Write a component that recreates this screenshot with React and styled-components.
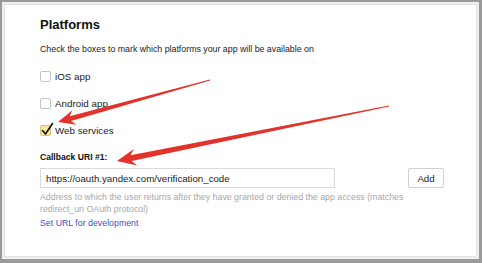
import styled, { createGlobalStyle } from 'styled-components'

const GlobalStyle = createGlobalStyle`
  html, body {
    margin: 0;
    padding: 0;
    background: #9a9a9a;
    font-family: "Liberation Sans", Arial, sans-serif;
  }
`

const Frame = styled.div`
  position: relative;
  box-sizing: border-box;
  width: 482px;
  height: 263px;
  padding: 2px 3px 4px 2px;
  background: #9a9a9a;
`

const Matte = styled.div`
  box-sizing: border-box;
  height: 100%;
  padding: 2px;
  background: #efefef;
`

const Card = styled.div`
  box-sizing: border-box;
  height: 100%;
  padding: 12px 0 0 35px;
  background: #fff;
  border: 1px solid #e3e3e3;
  display: flex;
  flex-direction: column;
  align-items: flex-start;
`

const Title = styled.h2`
  margin: 0;
  font-size: 13px;
  line-height: 16px;
  font-weight: 700;
  color: #111;
`

const Lead = styled.p`
  margin: 11px 0 0;
  font-size: 8.8px;
  line-height: 11px;
  color: #222;
`

const Options = styled.div`
  margin-top: 14px;
  display: flex;
  flex-direction: column;
  gap: 13px;
`

const Option = styled.label`
  display: flex;
  align-items: center;
  gap: 4px;
  height: 14px;
  font-size: 9.8px;
  color: #222;
`

const Box = styled.span`
  position: relative;
  box-sizing: border-box;
  width: 11px;
  height: 11px;
  border-radius: 2px;
  border: 1px solid ${p => (p.$checked ? '#d6c27c' : '#c4c4c4')};
  background: ${p => (p.$checked ? '#f8e6a2' : '#fff')};
`

const Tick = styled.svg`
  position: absolute;
  left: 0;
  top: -3px;
  width: 12px;
  height: 13px;
  overflow: visible;
`

const FieldLabel = styled.div`
  margin-top: 15px;
  font-size: 8.6px;
  line-height: 11px;
  font-weight: 700;
  color: #111;
`

const FieldRow = styled.div`
  margin-top: 5px;
  display: flex;
  align-items: center;
  gap: 73px;
`

const Input = styled.div`
  box-sizing: border-box;
  width: 295px;
  height: 20px;
  padding: 0 5px;
  display: flex;
  align-items: center;
  border: 1px solid #dadada;
  font-size: 9.7px;
  color: #222;
`

const Button = styled.div`
  box-sizing: border-box;
  width: 36px;
  height: 20px;
  display: flex;
  align-items: center;
  justify-content: center;
  border: 1px solid #d0d0d0;
  border-radius: 2px;
  background: #fff;
  font-size: 9.7px;
  color: #222;
`

const Hint = styled.p`
  margin: 4px 0 0;
  width: 375px;
  font-size: 8.8px;
  line-height: 11.5px;
  color: #a8a8a8;
`

const Link = styled.a`
  margin-top: 3px;
  font-size: 8.8px;
  line-height: 11px;
  color: #4450c4;
  text-decoration: none;
`

const Overlay = styled.svg`
  position: absolute;
  left: 0;
  top: 0;
  width: 482px;
  height: 263px;
  pointer-events: none;
`

const arrowPoints = (x1, y1, x2, y2, w0, w1, len, head) => {
  const dx = x2 - x1
  const dy = y2 - y1
  const l = Math.hypot(dx, dy)
  const ux = dx / l
  const uy = dy / l
  const nx = -uy
  const ny = ux
  const neck = [x2 - ux * len * 0.75, y2 - uy * len * 0.75]
  const base = [x2 - ux * len, y2 - uy * len]
  const pts = [
    [x1 + nx * w0 / 2, y1 + ny * w0 / 2],
    [neck[0] + nx * w1 / 2, neck[1] + ny * w1 / 2],
    [base[0] + nx * head / 2, base[1] + ny * head / 2],
    [x2, y2],
    [base[0] - nx * head / 2, base[1] - ny * head / 2],
    [neck[0] - nx * w1 / 2, neck[1] - ny * w1 / 2],
    [x1 - nx * w0 / 2, y1 - ny * w0 / 2],
  ]
  return pts.map(p => p.map(v => v.toFixed(1)).join(',')).join(' ')
}

const platforms = [
  { name: 'iOS app', checked: false },
  { name: 'Android app', checked: false },
  { name: 'Web services', checked: true },
]

export default function App() {
  return (
    <>
      <GlobalStyle />
      <Frame>
        <Matte>
          <Card>
            <Title>Platforms</Title>
            <Lead>Check the boxes to mark which platforms your app will be available on</Lead>
            <Options>
              {platforms.map(p => (
                <Option key={p.name}>
                  <Box $checked={p.checked}>
                    {p.checked && (
                      <Tick viewBox='0 0 12 13'>
                        <path d='M1.5 7.5 L4.5 11 L11.5 0.5' fill='none' stroke='#111' strokeWidth='1.6' strokeLinecap='round' strokeLinejoin='round' />
                      </Tick>
                    )}
                  </Box>
                  {p.name}
                </Option>
              ))}
            </Options>
            <FieldLabel>Callback URI #1:</FieldLabel>
            <FieldRow>
              <Input>https://oauth.yandex.com/verification_code</Input>
              <Button>Add</Button>
            </FieldRow>
            <Hint>Address to which the user returns after they have granted or denied the app access (matches redirect_uri OAuth protocol)</Hint>
            <Link href='#'>Set URL for development</Link>
          </Card>
        </Matte>
        <Overlay viewBox='0 0 482 263'>
          <polygon points={arrowPoints(210, 80, 58, 122, 1, 5, 17, 15)} fill='#e2322a' />
          <polygon points={arrowPoints(389, 106, 117, 161, 1, 6, 19, 17)} fill='#e2322a' />
        </Overlay>
      </Frame>
    </>
  )
}
